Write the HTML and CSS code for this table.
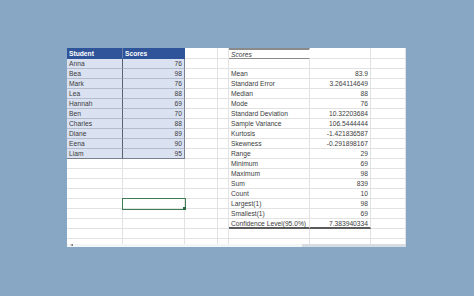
FILE: index.html
```html
<!DOCTYPE html>
<html>
<head>
<meta charset="utf-8">
<link rel="stylesheet" href="styles.css">
</head>
<body>
<div class="frame">
  <div class="sheet">
    <!-- row 0 -->
    <div class="c th tha">Student</div><div class="c th thb">Scores</div><div class="c"></div><div class="c"></div><div class="c sh">Scores</div><div class="c"></div><div class="c"></div>
    <!-- row 1 -->
    <div class="c ta">Anna</div><div class="c tb n">76</div><div class="c"></div><div class="c"></div><div class="c"></div><div class="c"></div><div class="c"></div>
    <div class="c ta">Bea</div><div class="c tb n">98</div><div class="c"></div><div class="c"></div><div class="c sl">Mean</div><div class="c n">83.9</div><div class="c"></div>
    <div class="c ta">Mark</div><div class="c tb n">76</div><div class="c"></div><div class="c"></div><div class="c sl">Standard Error</div><div class="c n">3.264114649</div><div class="c"></div>
    <div class="c ta">Lea</div><div class="c tb n">88</div><div class="c"></div><div class="c"></div><div class="c sl">Median</div><div class="c n">88</div><div class="c"></div>
    <div class="c ta">Hannah</div><div class="c tb n">69</div><div class="c"></div><div class="c"></div><div class="c sl">Mode</div><div class="c n">76</div><div class="c"></div>
    <div class="c ta">Ben</div><div class="c tb n">70</div><div class="c"></div><div class="c"></div><div class="c sl">Standard Deviation</div><div class="c n">10.32203684</div><div class="c"></div>
    <div class="c ta">Charles</div><div class="c tb n">88</div><div class="c"></div><div class="c"></div><div class="c sl">Sample Variance</div><div class="c n">106.5444444</div><div class="c"></div>
    <div class="c ta">Diane</div><div class="c tb n">89</div><div class="c"></div><div class="c"></div><div class="c sl">Kurtosis</div><div class="c n">-1.421836587</div><div class="c"></div>
    <div class="c ta">Eena</div><div class="c tb n">90</div><div class="c"></div><div class="c"></div><div class="c sl">Skewness</div><div class="c n">-0.291898167</div><div class="c"></div>
    <div class="c ta last">Liam</div><div class="c tb n last">95</div><div class="c"></div><div class="c"></div><div class="c sl">Range</div><div class="c n">29</div><div class="c"></div>
    <div class="c"></div><div class="c"></div><div class="c"></div><div class="c"></div><div class="c sl">Minimum</div><div class="c n">69</div><div class="c"></div>
    <div class="c"></div><div class="c"></div><div class="c"></div><div class="c"></div><div class="c sl">Maximum</div><div class="c n">98</div><div class="c"></div>
    <div class="c"></div><div class="c"></div><div class="c"></div><div class="c"></div><div class="c sl">Sum</div><div class="c n">839</div><div class="c"></div>
    <div class="c"></div><div class="c"></div><div class="c"></div><div class="c"></div><div class="c sl">Count</div><div class="c n">10</div><div class="c"></div>
    <div class="c"></div><div class="c sel"></div><div class="c"></div><div class="c"></div><div class="c sl">Largest(1)</div><div class="c n">98</div><div class="c"></div>
    <div class="c"></div><div class="c"></div><div class="c"></div><div class="c"></div><div class="c sl">Smallest(1)</div><div class="c n">69</div><div class="c"></div>
    <div class="c"></div><div class="c"></div><div class="c"></div><div class="c"></div><div class="c sl end">Confidence Level(95.0%)</div><div class="c n end">7.383940334</div><div class="c"></div>
    <div class="c"></div><div class="c"></div><div class="c"></div><div class="c"></div><div class="c"></div><div class="c"></div><div class="c"></div>
    <div class="c"></div><div class="c"></div><div class="c"></div><div class="c"></div><div class="c"></div><div class="c"></div><div class="c"></div>
  </div>
  <div class="footer">
    <div class="tabs"><span class="arrow"></span></div>
    <div class="hscroll"></div>
  </div>
</div>
</body>
</html>
```
FILE: styles.css
```css
html, body {
  margin: 0;
  padding: 0;
}
body {
  width: 474px;
  height: 296px;
  background: #87a7c4;
  font-family: "Liberation Sans", Arial, sans-serif;
  overflow: hidden;
}
.frame {
  margin: 48px 0 0 67px;
  width: 339px;
}
.sheet {
  background: #ffffff;
  height: 196px;
  overflow: hidden;
  display: grid;
  grid-template-columns: 56px 62px 33px 11px 81px 61px 35px;
  grid-template-rows: 11px;
  grid-auto-rows: 10px;
}
.c {
  box-sizing: border-box;
  border-right: 1px solid #e2e2e2;
  border-bottom: 1px solid #e2e2e2;
  font-size: 6.7px;
  line-height: 10px;
  color: #3c3c3c;
  padding: 0 2px;
  white-space: nowrap;
  overflow: visible;
}
.n { text-align: right; }
.th {
  background: #30549a;
  color: #ffffff;
  font-weight: bold;
  line-height: 11px;
  border-bottom-color: #30549a;
}
.tha { border-right-color: #6b7fa8; }
.thb { border-right-color: #30549a; }
.ta, .tb {
  background: #dae1f1;
  border-bottom-color: #b4bccb;
}
.ta { border-right-color: #5c6170; }
.tb { border-right-color: #7b8090; }
.last { border-bottom-color: #7b8090; }
.sh {
  font-style: italic;
  line-height: 10px;
  border-top: 2px solid #8a8a8a;
  border-bottom: 1px solid #8a8a8a;
  border-right-color: #ffffff;
}
.sl { border-right-color: #e2e2e2; }
.end { border-bottom: 2px solid #5a5a5a; line-height: 9px; }
.sel {
  position: relative;
  outline: 1.5px solid #3e7d56;
  outline-offset: -0.5px;
}
.sel::after {
  content: "";
  position: absolute;
  right: -2px;
  bottom: -2px;
  width: 3px;
  height: 3px;
  background: #2b6a43;
}
.footer {
  display: flex;
  height: 3px;
}
.tabs {
  width: 235px;
  background: #f4f5f7;
  position: relative;
}
.arrow {
  position: absolute;
  left: 3px;
  top: 0;
  width: 0;
  height: 0;
  border-top: 1.5px solid transparent;
  border-bottom: 1.5px solid transparent;
  border-right: 3px solid #666;
}
.hscroll {
  flex: 1;
  background: #d5dce4;
}
```
